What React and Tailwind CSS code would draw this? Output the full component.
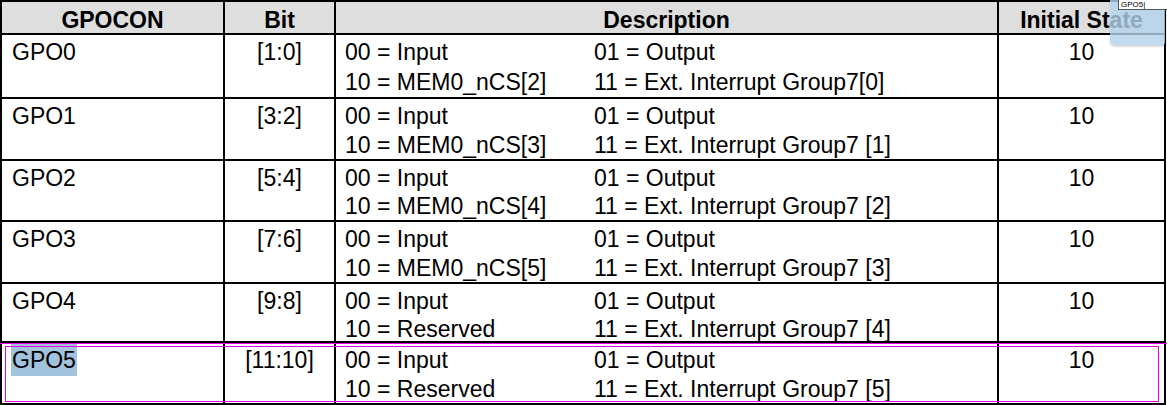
import React from "react";

const rows = [
  { name: "GPO0", bit: "[1:0]", a: "10 = MEM0_nCS[2]", b: "11 = Ext. Interrupt Group7[0]", h: "h-[64px]" },
  { name: "GPO1", bit: "[3:2]", a: "10 = MEM0_nCS[3]", b: "11 = Ext. Interrupt Group7 [1]", h: "h-[62px]" },
  { name: "GPO2", bit: "[5:4]", a: "10 = MEM0_nCS[4]", b: "11 = Ext. Interrupt Group7 [2]", h: "h-[61px]" },
  { name: "GPO3", bit: "[7:6]", a: "10 = MEM0_nCS[5]", b: "11 = Ext. Interrupt Group7 [3]", h: "h-[62px]" },
  { name: "GPO4", bit: "[9:8]", a: "10 = Reserved", b: "11 = Ext. Interrupt Group7 [4]", h: "h-[59px]" },
  { name: "GPO5", bit: "[11:10]", a: "10 = Reserved", b: "11 = Ext. Interrupt Group7 [5]", h: "h-[62px]", sel: true },
];

export default function App() {
  return (
    <div
      className="relative w-[1167px] h-[405px] overflow-hidden bg-white text-black"
      style={{ fontFamily: '"Liberation Sans", Arial, sans-serif' }}
    >
      <div className="relative w-[1166px] border-2 border-black text-[23px]">
        {/* header */}
        <div className="flex h-[33px] border-b-2 border-black bg-[#dedede] font-bold leading-[28px]">
          <div className="w-[223px] border-r-2 border-black pt-[4px] text-center">GPOCON</div>
          <div className="w-[111px] border-r-2 border-black pt-[4px] text-center">Bit</div>
          <div className="w-[663px] border-r-2 border-black pt-[4px] text-center">Description</div>
          <div className="flex-1 pt-[4px] text-center">Initial State</div>
        </div>
        {rows.map((r) => (
          <div key={r.name} className={`flex ${r.h} border-b-2 border-black leading-[28px]`}>
            <div className="w-[223px] border-r-2 border-black pl-[10px] pt-[3px]">
              {r.sel ? (
                <span className="-ml-[1px] bg-[#a3c2dd] px-[1px] py-[3px]">{r.name}</span>
              ) : (
                r.name
              )}
            </div>
            <div className="w-[111px] border-r-2 border-black pt-[3px] text-center">{r.bit}</div>
            <div className="grid w-[663px] grid-cols-[249px_1fr] border-r-2 border-black pl-[9px] pt-[3px]">
              <div>00 = Input</div>
              <div>01 = Output</div>
              <div className="whitespace-nowrap">{r.a}</div>
              <div className="whitespace-nowrap">{r.b}</div>
            </div>
            <div className="flex-1 pt-[3px] text-center">10</div>
          </div>
        ))}
      </div>

      {/* selection outlines */}
      <div className="absolute left-0 top-[343px] h-[1px] w-[1167px] bg-[#e400e4]" />
      <div className="absolute left-[5px] top-[346px] h-[56px] w-[1154px] border border-[#e400e4]" />

      {/* find overlay */}
      <div className="absolute left-[1110px] top-0 h-[45px] w-[55px] rounded-b-[3px] bg-[#b4d2ea]/80 shadow-[1px_1px_3px_rgba(0,0,0,0.25)]" />
      <div className="absolute left-[1118px] top-0 h-[10px] w-[49px] border-b border-l border-[#555] bg-white pl-[2px] text-[8px] leading-[9px] text-black">
        GPO5|
      </div>
    </div>
  );
}
